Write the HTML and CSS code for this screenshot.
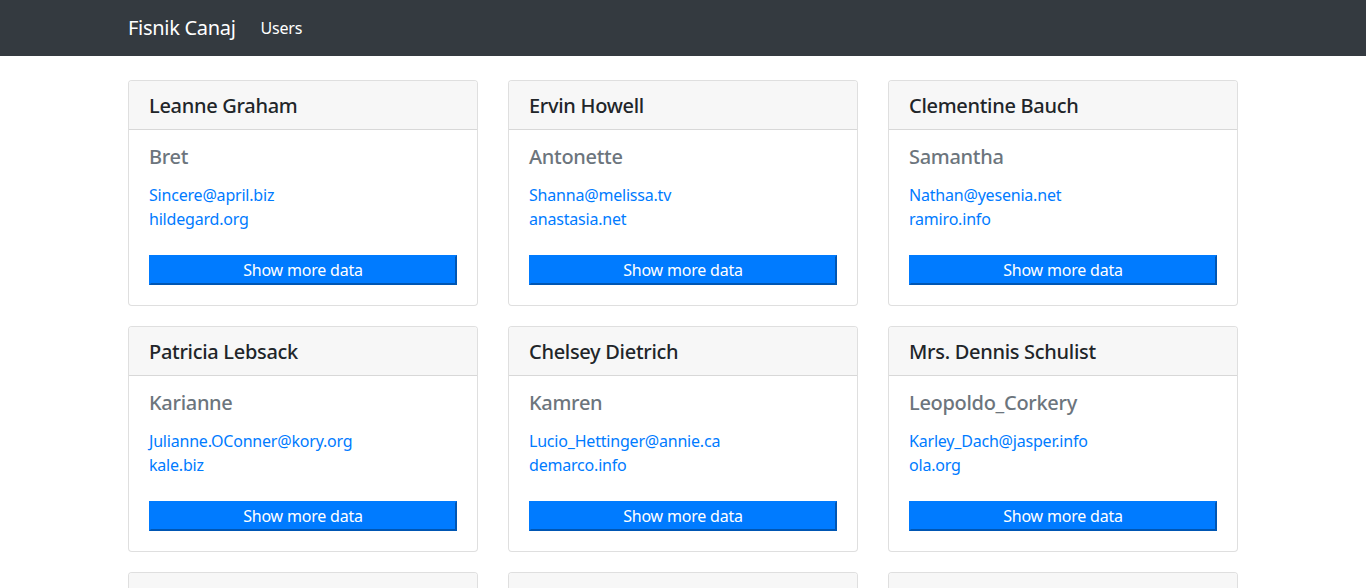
FILE: index.html
```html
<!DOCTYPE html>
<html lang="en">
<head>
<meta charset="utf-8">
<title>Users</title>
<link rel="stylesheet" href="styles.css">
</head>
<body>
<nav class="navbar">
  <div class="container nav-inner">
    <a class="brand" href="#">Fisnik Canaj</a>
    <a class="nav-link" href="#">Users</a>
  </div>
</nav>
<main class="container">
  <div class="grid">
    <div class="card">
      <div class="card-header"><h5>Leanne Graham</h5></div>
      <div class="card-body">
        <h5 class="subtitle">Bret</h5>
        <div class="links"><a href="#">Sincere@april.biz</a><a href="#">hildegard.org</a></div>
        <button class="btn">Show more data</button>
      </div>
    </div>
    <div class="card">
      <div class="card-header"><h5>Ervin Howell</h5></div>
      <div class="card-body">
        <h5 class="subtitle">Antonette</h5>
        <div class="links"><a href="#">Shanna@melissa.tv</a><a href="#">anastasia.net</a></div>
        <button class="btn">Show more data</button>
      </div>
    </div>
    <div class="card">
      <div class="card-header"><h5>Clementine Bauch</h5></div>
      <div class="card-body">
        <h5 class="subtitle">Samantha</h5>
        <div class="links"><a href="#">Nathan@yesenia.net</a><a href="#">ramiro.info</a></div>
        <button class="btn">Show more data</button>
      </div>
    </div>
    <div class="card">
      <div class="card-header"><h5>Patricia Lebsack</h5></div>
      <div class="card-body">
        <h5 class="subtitle">Karianne</h5>
        <div class="links"><a href="#">Julianne.OConner@kory.org</a><a href="#">kale.biz</a></div>
        <button class="btn">Show more data</button>
      </div>
    </div>
    <div class="card">
      <div class="card-header"><h5>Chelsey Dietrich</h5></div>
      <div class="card-body">
        <h5 class="subtitle">Kamren</h5>
        <div class="links"><a href="#">Lucio_Hettinger@annie.ca</a><a href="#">demarco.info</a></div>
        <button class="btn">Show more data</button>
      </div>
    </div>
    <div class="card">
      <div class="card-header"><h5>Mrs. Dennis Schulist</h5></div>
      <div class="card-body">
        <h5 class="subtitle">Leopoldo_Corkery</h5>
        <div class="links"><a href="#">Karley_Dach@jasper.info</a><a href="#">ola.org</a></div>
        <button class="btn">Show more data</button>
      </div>
    </div>
    <div class="card">
      <div class="card-header"><h5>Kurtis Weissnat</h5></div>
      <div class="card-body">
        <h5 class="subtitle">Elwyn.Skiles</h5>
        <div class="links"><a href="#">Telly.Hoeger@billy.biz</a><a href="#">elvis.io</a></div>
        <button class="btn">Show more data</button>
      </div>
    </div>
    <div class="card">
      <div class="card-header"><h5>Nicholas Runolfsdottir V</h5></div>
      <div class="card-body">
        <h5 class="subtitle">Maxime_Nienow</h5>
        <div class="links"><a href="#">Sherwood@rosamond.me</a><a href="#">jacynthe.com</a></div>
        <button class="btn">Show more data</button>
      </div>
    </div>
    <div class="card">
      <div class="card-header"><h5>Glenna Reichert</h5></div>
      <div class="card-body">
        <h5 class="subtitle">Delphine</h5>
        <div class="links"><a href="#">Chaim_McDermott@dana.io</a><a href="#">conrad.com</a></div>
        <button class="btn">Show more data</button>
      </div>
    </div>
  </div>
</main>
</body>
</html>
```
FILE: styles.css
```css
* { box-sizing: border-box; }
html, body { margin: 0; padding: 0; }
body {
  font-family: "Noto Sans", "Open Sans", "Liberation Sans", sans-serif;
  font-size: 16px;
  line-height: 24px;
  color: #212529;
  background: #fff;
}
.container {
  width: 1140px;
  margin: 0 auto;
  padding: 0 15px;
}
.navbar {
  background: #343a40;
  height: 56px;
}
.nav-inner {
  display: flex;
  align-items: center;
  height: 56px;
}
.brand {
  color: #fff;
  font-size: 20px;
  line-height: 30px;
  letter-spacing: -0.3px;
  text-decoration: none;
  margin-right: 25px;
}
.nav-link {
  color: #fff;
  font-size: 16px;
  letter-spacing: -0.2px;
  text-decoration: none;
}
main.container { padding-top: 24px; }
.grid {
  display: grid;
  grid-template-columns: repeat(3, 350px);
  column-gap: 30px;
  row-gap: 20px;
}
.card {
  border: 1px solid rgba(0,0,0,.125);
  border-radius: 4px;
  background: #fff;
  overflow: hidden;
}
.card-header {
  background: #f7f7f7;
  border-bottom: 1px solid rgba(0,0,0,.125);
  padding: 13px 20px 11px;
}
.card-header h5 {
  margin: 0;
  font-size: 20px;
  line-height: 24px;
  font-weight: 500;
  letter-spacing: -0.3px;
}
.card-body { padding: 15px 20px 20px; }
.subtitle {
  margin: 0 0 14px;
  font-size: 20px;
  line-height: 24px;
  font-weight: 500;
  letter-spacing: -0.3px;
  color: #6c757d;
}
.links {
  display: flex;
  flex-direction: column;
  align-items: flex-start;
  margin-bottom: 24px;
  letter-spacing: -0.2px;
}
.links a { color: #007bff; text-decoration: none; }
.btn {
  display: block;
  width: 100%;
  height: 30px;
  font-family: inherit;
  font-size: 16px;
  line-height: 20px;
  letter-spacing: -0.2px;
  color: #fff;
  background: #007bff;
  border: 2px solid;
  border-color: #007bff #0056b3 #0056b3 #007bff;
  padding: 2px 6px;
  cursor: pointer;
}
```
